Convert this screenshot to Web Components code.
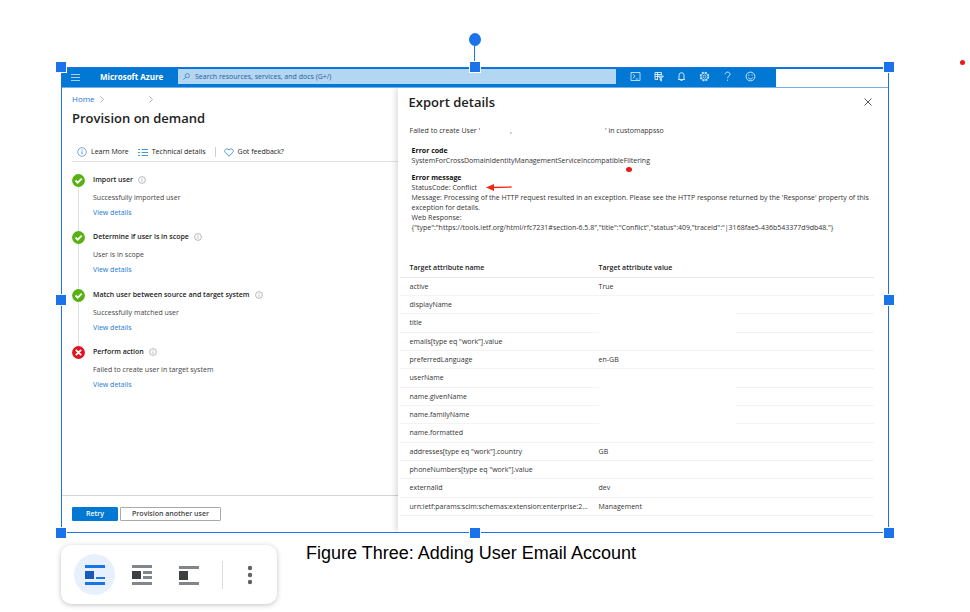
<!DOCTYPE html>
<html lang="en">
<head>
<meta charset="utf-8">
<title>Figure Three: Adding User Email Account</title>
<style>
  body { margin: 0; background: #fff; font-family: "Open Sans", "Noto Sans", sans-serif; color: #333; }
</style>
</head>
<body>
<doc-page>
  <selection-frame>
    <azure-topbar></azure-topbar>
    <portal-blades>
      <provision-blade slot="main">
        <provision-step heading="Import user" state="ok">Successfully imported user</provision-step>
        <provision-step heading="Determine if user is in scope" state="ok">User is in scope</provision-step>
        <provision-step heading="Match user between source and target system" state="ok">Successfully matched user</provision-step>
        <provision-step heading="Perform action" state="failed">Failed to create user in target system</provision-step>
      </provision-blade>
      <export-blade slot="context"></export-blade>
    </portal-blades>
  </selection-frame>
  <span slot="caption">Figure Three: Adding User Email Account</span>
  <image-toolbar slot="toolbar"></image-toolbar>
</doc-page>

<script>
const define = (name, html, setup) => {
  const template = document.createElement('template');
  template.innerHTML = html;
  customElements.define(name, class extends HTMLElement {
    constructor() {
      super();
      this.attachShadow({ mode: 'open' }).append(template.content.cloneNode(true));
    }
    connectedCallback() { if (setup) setup(this, this.shadowRoot); }
  });
};

define('doc-page', `
<style>
  :host { display: block; position: relative; box-sizing: border-box; min-height: 100vh; padding: 67px 81px 8px 61px; }
  figure { margin: 0; }
  figcaption { display: block; padding: 9px 8px 0 0; text-align: center; font: 18px/22px "Liberation Sans", Arial, sans-serif; color: #000; }
  .tools { position: absolute; left: 61px; top: 545px; }
  .dot { position: absolute; left: 960px; top: 60px; width: 5px; height: 5px; border-radius: 50%; background: #e81b1b; }
</style>
<figure>
  <slot></slot>
  <figcaption><slot name="caption"></slot></figcaption>
</figure>
<div class="tools"><slot name="toolbar"></slot></div>
<span class="dot"></span>`);

define('selection-frame', `
<style>
  :host { display: block; position: relative; border: 1px solid #1a73e8; }
  .overlay { position: absolute; inset: -1px; pointer-events: none; }
  .overlay i { position: absolute; width: 10px; height: 10px; margin: -6px; background: #1a73e8; border: 1px solid #fff; }
  .w { left: 0; } .c { left: 50%; } .e { left: 100%; }
  .n { top: 0; } .m { top: 50%; } .s { top: 100%; }
  .overlay b { position: absolute; left: 50%; top: -27px; width: 1px; height: 27px; margin-left: -1px; background: #1a73e8; }
  .overlay em { position: absolute; left: 50%; top: -34px; width: 12px; height: 13px; margin-left: -6px; border-radius: 50%; background: #1a73e8; }
</style>
<slot></slot>
<div class="overlay">
  <b></b><em></em>
  <i class="n w"></i><i class="n c"></i><i class="n e"></i>
  <i class="m w"></i><i class="m e"></i>
  <i class="s w"></i><i class="s c"></i><i class="s e"></i>
</div>`);

define('azure-topbar', `
<style>
  :host { display: flex; align-items: flex-start; box-sizing: border-box; height: 20px; padding: 1px 0 0 9px; background: #0078d4; border-bottom: 1px solid #74b0ea; color: #fff; }
  button { display: flex; padding: 0; border: 0; background: none; color: inherit; }
  svg { display: block; fill: none; stroke: currentColor; stroke-opacity: .8; }
  .menu { margin: 4px 20px 0 0; }
  .menu svg { stroke-opacity: .65; }
  .brand { flex: 0 0 78px; font-weight: 700; font-size: 8px; line-height: 16px; white-space: nowrap; }
  label { flex: 438 1 438px; display: flex; align-items: center; gap: 5px; min-width: 0; height: 15px; padding-left: 5px; background: #b3d6f2; color: #2a6ba8; box-sizing: border-box; }
  input { flex: 1; min-width: 0; padding: 0; border: 0; outline: 0; background: none; font: 7px/14px "Open Sans", sans-serif; color: inherit; }
  input::placeholder { color: #2a5f96; opacity: 1; }
  nav { flex: 160 1 160px; display: flex; gap: 12px; padding: 2px 0 0 14px; box-sizing: border-box; }
  .account { flex: 112 1 112px; height: 18px; background: #fff; }
</style>
<button class="menu" aria-label="Menu"><svg width="9" height="9" viewBox="0 0 9 9"><path d="M0 1.5h9M0 4.5h9M0 7.5h9"/></svg></button>
<span class="brand">Microsoft Azure</span>
<label><svg width="7" height="7" viewBox="0 0 7 7"><circle cx="4.3" cy="2.7" r="2.1" stroke-width=".8"/><path d="M2.8 4.2L.3 6.7" stroke-width=".8"/></svg>
<input type="text" aria-label="Search" placeholder="Search resources, services, and docs (G+/)"></label>
<nav>
  <button aria-label="Cloud Shell"><svg width="11" height="11" viewBox="0 0 11 11" stroke-width=".9"><path d="M1 1.5h9v8H1zM2.8 3.2l2.3 2-2.3 2M5.7 8h2.5"/></svg></button>
  <button aria-label="Directories"><svg width="11" height="11" viewBox="0 0 11 11"><path d="M8.500 4V1.500H2v7h3M2 3.500h6.500M2 5.500h3M4.500 1.500v7"/><path d="M5 5h5.500L8.500 7.300v2.900L7 9V7.300z" stroke-width=".8" fill="#8dc2ee"/></svg></button>
  <button aria-label="Notifications"><svg width="11" height="11" viewBox="0 0 11 11"><path d="M2 8.5h7M3 8V4.2a2.5 2.5 0 0 1 5 0V8M4.5 9.5h2"/></svg></button>
  <button aria-label="Settings"><svg width="11" height="11" viewBox="0 0 11 11"><circle cx="5.5" cy="5.5" r="4.2" stroke-width="1.2" stroke-dasharray="2 1.3"/><circle cx="5.5" cy="5.5" r="3.4" stroke-width=".8"/><circle cx="5.5" cy="5.5" r="1.5" stroke-width=".8"/></svg></button>
  <button aria-label="Help"><svg width="11" height="11" viewBox="0 0 11 11"><path d="M3.2 3.2C3.2.4 8 .5 8 3.2c0 1.7-2.4 2-2.4 4M5.6 8.6v1.2"/></svg></button>
  <button aria-label="Feedback"><svg width="11" height="11" viewBox="0 0 11 11"><circle cx="5.5" cy="5.5" r="4.4"/><path d="M3.3 6.5c.8 2 3.6 2 4.4 0M3.9 3.4v1.3M7.1 3.4v1.3"/></svg></button>
</nav>
<div class="account"></div>`);

define('portal-blades', `
<style>
  :host { display: grid; grid-template-columns: 336fr 491fr; background: #fff; }
  ::slotted(*) { min-width: 0; }
</style>
<slot name="main"></slot><slot name="context"></slot>`);

define('provision-blade', `
<style>
  :host { display: flex; flex-direction: column; font-size: 7px; line-height: 12px; }
  header { padding: 5px 0 0 10px; }
  a { color: #1a78d6; text-decoration: none; }
  .crumbs { display: flex; align-items: center; gap: 5px; font-size: 8px; }
  .crumbs svg + svg { margin-left: 40px; }
  svg { display: block; fill: none; stroke: #4b95da; }
  .crumbs svg { stroke: #999; }
  h1 { margin: 4px 0 0; font-size: 13px; line-height: 18px; font-weight: 600; color: #222; }
  .bar { display: flex; align-items: center; margin: 19px 0 0 10px; padding: 0 0 3px 5px; border-bottom: 1px solid #e3e3e3; }
  .bar button { display: flex; align-items: center; gap: 4px; margin-right: 9px; padding: 0; border: 0; background: none; font: inherit; color: #222; white-space: nowrap; }
  .bar hr { width: 1px; height: 10px; margin: 0 8px 0 0; border: 0; background: #d0d0d0; }
  .steps { padding: 12px 0 0 10px; }
  footer { display: flex; gap: 2px; margin-top: auto; padding: 11px 0 11px 10px; border-top: 1px solid #d4d4d4; }
  footer button { box-sizing: border-box; height: 14px; padding: 0 11px; border: 1px solid #aaa; border-radius: 1px; background: #fff; font: 600 7px/12px "Open Sans", sans-serif; color: #444; }
  footer .primary { padding: 0 13px; border-color: #0078d4; background: #0078d4; color: #fff; }
</style>
<header>
  <div class="crumbs"><a href="#home">Home</a>
    <svg width="4" height="7" viewBox="0 0 4 7"><path d="M.5.5l3 3-3 3" stroke-width=".8"/></svg>
    <svg width="4" height="7" viewBox="0 0 4 7"><path d="M.5.5l3 3-3 3" stroke-width=".8"/></svg></div>
  <h1>Provision on demand</h1>
</header>
<div class="bar">
  <button><svg width="10" height="10" viewBox="0 0 10 10"><circle cx="5" cy="5" r="4.3" stroke-width=".8"/><path d="M5 4.3v3M5 2.5v1"/></svg>Learn More</button>
  <button><svg width="10" height="9" viewBox="0 0 10 9"><path d="M0 1.5h2M0 4.5h2M0 7.5h2M3.5 1.5H10M3.5 4.5H10M3.5 7.5H10"/></svg>Technical details</button>
  <hr>
  <button><svg width="10" height="9" viewBox="0 0 10 9"><path d="M5 8.2L1.2 4.5C-.6 2.2 2.6-.7 5 2 7.4-.7 10.6 2.2 8.800 4.500z"/></svg>Got feedback?</button>
</div>
<div class="steps"><slot></slot></div>
<footer><button class="primary">Retry</button><button>Provision another user</button></footer>`);

define('provision-step', `
<style>
  :host { display: grid; grid-template-columns: 12px 1fr; column-gap: 9px; min-height: 57px; }
  :host(:nth-child(even)) { min-height: 58px; }
  .rail { display: flex; flex-direction: column; align-items: center; }
  .rail::after { content: ""; flex: 1; width: 1px; background: #e2e2e2; }
  :host([state=failed]) .rail::after { content: none; }
  .badge { display: block; }
  .badge circle { fill: #57b110; }
  .badge path { fill: none; stroke: #fff; stroke-width: 1.8; }
  .cross, :host([state=failed]) .tick { display: none; }
  :host([state=failed]) .cross { display: inline; }
  :host([state=failed]) .badge circle { fill: #e0141f; }
  h2 { display: flex; align-items: center; gap: 5px; margin: 0; font-size: 7px; line-height: 12px; font-weight: 600; color: #222; white-space: nowrap; }
  h2 svg { fill: none; stroke: #999; stroke-width: .7; }
  p { margin: 6px 0 4px; line-height: 11px; color: #444; }
  a { display: inline-block; line-height: 12px; color: #1a78d6; text-decoration: none; }
</style>
<div class="rail"><svg class="badge" width="13" height="13" viewBox="0 0 13 13"><circle cx="6.5" cy="6.500" r="6.400"/><path class="tick" d="M3.500 6.500L5.700 8.700L9.700 4.600"/><path class="cross" d="M3.800 3.800l5.400 5.400M9.200 3.800L3.800 9.200"/></svg></div>
<div>
  <h2><span></span><svg width="8" height="8" viewBox="0 0 8 8"><circle cx="4" cy="4" r="3.400"/><path d="M4 3.500v2.400M4 2v.8"/></svg></h2>
  <p><slot></slot></p>
  <a href="#details">View details</a>
</div>`, (el, root) => {
  root.querySelector('h2 span').textContent = el.getAttribute('heading');
});

define('export-blade', `
<style>
  :host { display: block; position: relative; padding: 5px 14px 16px 0; background: #fff; box-shadow: -2px 0 6px rgba(0,0,0,.15); clip-path: inset(0 0 0 -12px); font-size: 7px; line-height: 10px; color: #333; }
  header { display: flex; justify-content: space-between; align-items: center; padding: 0 2px 0 11px; }
  h1 { margin: 0; font-size: 13px; line-height: 18px; font-weight: 600; color: #222; }
  header button { display: flex; padding: 0; border: 0; background: none; }
  header svg { fill: none; stroke: #444; }
  .summary { display: flex; margin: 15px 0 0 12px; white-space: pre; }
  .summary .hidden { flex: 0 0 125px; padding-left: 30px; box-sizing: border-box; }
  section { position: relative; margin: 10px 0 0 14px; }
  section + section { margin-top: 7px; }
  h2 { margin: 0; font-size: 7px; line-height: 10px; font-weight: 700; color: #111; }
  p { margin: 0; }
  .dot { position: absolute; left: 214px; top: 21px; width: 6px; height: 5px; border-radius: 50%; background: #e81b1b; }
  .arrow { position: absolute; left: 74px; top: 10px; }
  table { width: calc(100% - 2px); margin: 25px 0 0 2px; border-collapse: separate; border-spacing: 0; table-layout: fixed; }
  th, td { height: 17px; padding: 0; border-bottom: 1px solid #f3f3f3; text-align: left; font-weight: 400; white-space: nowrap; }
  thead th { height: 19px; font-weight: 600; color: #222; border-color: #e8e8e8; }
  tbody tr:nth-child(3n) > * { height: 18px; }
  tr > :first-child { padding-left: 10px; overflow: hidden; text-overflow: ellipsis; }
  col:nth-child(1) { width: 199px; } col:nth-child(2) { width: 136px; }
  .redacted td:nth-child(2) { border-color: transparent; }
</style>
<header><h1>Export details</h1><button aria-label="Close"><svg width="8" height="8" viewBox="0 0 8 8"><path d="M.5.5l7 7M7.500.5l-7 7" stroke-width=".9"/></svg></button></header>
<div class="summary"><span>Failed to create User '</span><span class="hidden">,</span><span>' in customappsso</span></div>
<section>
  <h2>Error code</h2>
  <p>SystemForCrossDomainIdentityManagementServiceIncompatibleFiltering</p>
  <span class="dot"></span>
</section>
<section>
  <h2>Error message</h2>
  <p>StatusCode: Conflict</p>
  <p>Message: Processing of the HTTP request resulted in an exception. Please see the HTTP response returned by the 'Response' property of this exception for details.</p>
  <p>Web Response:</p>
  <p>{"type":"https://tools.ietf.org/html/rfc7231#section-6.5.8","title":"Conflict","status":409,"traceId":"|3168fae5-436b543377d9db48."}</p>
  <svg class="arrow" width="26" height="9" viewBox="0 0 26 9"><path d="M0 4.500L8 1v7z" fill="#f22613"/><path d="M6 4.500L25.500 4" stroke="#f22613" stroke-width="1.300"/></svg>
</section>
<table>
  <colgroup><col><col><col></colgroup>
  <thead><tr><th>Target attribute name</th><th>Target attribute value</th><th></th></tr></thead>
  <tbody></tbody>
</table>`, (el, root) => {
  const rows = [
    ['active', 'True'], ['displayName', ''], ['title', ''], ['emails[type eq "work"].value', null],
    ['preferredLanguage', 'en-GB'], ['userName', ''], ['name.givenName', ''], ['name.familyName', ''],
    ['name.formatted', null], ['addresses[type eq "work"].country', 'GB'], ['phoneNumbers[type eq "work"].value', null],
    ['externalId', 'dev'], ['urn:ietf:params:scim:schemas:extension:enterprise:2...', 'Management']
  ];
  const body = root.querySelector('tbody');
  for (const [name, value] of rows) {
    const row = body.insertRow();
    if (value === '') row.className = 'redacted';
    row.insertCell().textContent = name;
    row.insertCell().textContent = value || '';
    row.insertCell();
  }
});

define('image-toolbar', `
<style>
  :host { display: flex; align-items: center; gap: 6px; box-sizing: border-box; padding: 9px 7px 9px 13px; border-radius: 10px; background: #fff; box-shadow: 0 1px 5px rgba(60,64,67,.32); }
  button { display: grid; place-items: center; width: 41px; height: 41px; padding: 0; border: 0; border-radius: 50%; background: none; }
  button[aria-pressed=true] { background: #e8f0fe; }
  hr { width: 1px; height: 28px; margin: 0 0 0 7px; border: 0; background: #dadce0; }
</style>
<button aria-label="In line" aria-pressed="true"><svg width="20" height="20"><path fill="#1a73e8" d="M0 0h20v3H0zM11 12h9v2h-9zM0 17h20v3H0z"/><path fill="#185abc" d="M0 6h9v8H0z"/></svg></button>
<button aria-label="Wrap text"><svg width="20" height="20"><path fill="#80868b" d="M0 0h20v3H0zM11 6h9v3h-9zM11 11h9v3h-9zM0 17h20v3H0z"/><path fill="#3c4043" d="M0 6h9v8H0z"/></svg></button>
<button aria-label="Break text"><svg width="20" height="20"><path fill="#80868b" d="M0 1h20v3H0zM0 17h20v3H0z"/><path fill="#3c4043" d="M0 6h9v9H0z"/></svg></button>
<hr>
<button aria-label="More options"><svg width="6" height="20" fill="#5f6368"><circle cx="3" cy="3" r="2.200"/><circle cx="3" cy="10" r="2.200"/><circle cx="3" cy="17" r="2.200"/></svg></button>`);
</script>
</body>
</html>
